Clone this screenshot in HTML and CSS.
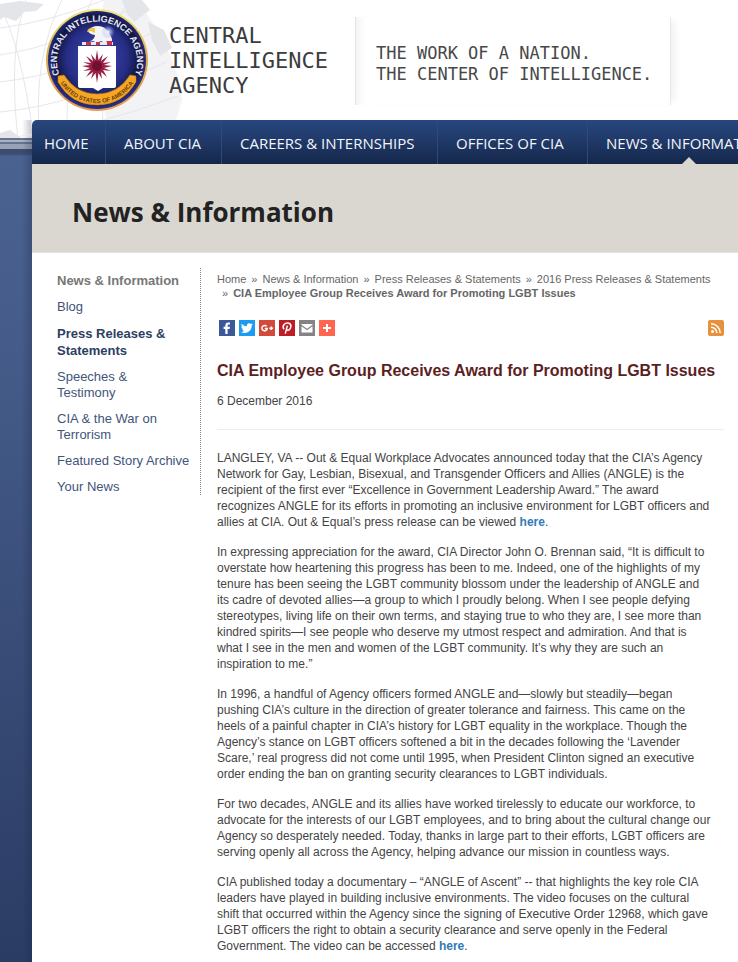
FILE: index.html
```html
<!DOCTYPE html>
<html lang="en">
<head>
<meta charset="utf-8">
<title>CIA Employee Group Receives Award for Promoting LGBT Issues</title>
<link rel="stylesheet" href="styles.css">
</head>
<body>
<header class="masthead">
  <svg class="globe" width="210" height="138" viewBox="0 0 210 138" aria-hidden="true">
    <path class="sea" d="M104 0H136Q176 48 182 100L170 140H112Q90 70 104 0Z"/>
    <path class="land" d="M0 4L20 1 44 4 36 11 24 12 16 21 4 17 0 20ZM122 0H142L150 10 134 22 126 12ZM148 22L164 30 172 48 160 56 152 40ZM0 133L10 130 24 140H0Z"/>
    <path class="grid" d="M0 28Q50 22 104 0M0 55Q60 46 128 10M0 82Q70 74 150 34M0 112Q70 106 166 62M0 139Q90 130 178 96M26 0Q8 50 18 140M62 0Q32 60 40 140M92 0Q62 60 68 140M128 0Q96 60 104 140M0 8Q20 40 34 140"/>
  </svg>
  <a class="brand" href="#">
    <svg class="seal" width="104" height="104" viewBox="0 0 104 104" role="img" aria-label="Seal">
      <defs>
        <radialGradient id="field" cx="50%" cy="48%" r="52%">
          <stop offset="0" stop-color="#3f4bb0"/>
          <stop offset=".6" stop-color="#262d86"/>
          <stop offset=".82" stop-color="#121640"/>
          <stop offset="1" stop-color="#2a3290"/>
        </radialGradient>
        <linearGradient id="rim" x1="0" y1="0" x2="0" y2="1">
          <stop offset="0" stop-color="#f0e87c"/>
          <stop offset=".5" stop-color="#d9a94a"/>
          <stop offset="1" stop-color="#e89a4c"/>
        </linearGradient>
        <radialGradient id="glow">
          <stop offset="0" stop-color="#fff"/>
          <stop offset="1" stop-color="#8fa0ff" stop-opacity="0"/>
        </radialGradient>
        <path id="arcTop" d="M14 66A40 40 0 1 1 90 66"/>
        <path id="arcBottom" d="M15 74A43 43 0 0 0 89 74"/>
      </defs>
      <circle cx="52" cy="52" r="51" fill="url(#rim)"/>
      <circle cx="52" cy="52" r="49" fill="url(#field)"/>
      <path d="M13 68L19 67Q31 86 52 86T85 67L91 68 91 74Q78 97 52 97T13 74Z" fill="#f5a623" stroke="#c47a17" stroke-width=".6"/>
      <text class="seal-name"><textPath href="#arcTop" startOffset="50%">CENTRAL INTELLIGENCE AGENCY</textPath></text>
      <text class="seal-nation"><textPath href="#arcBottom" startOffset="50%">UNITED STATES OF AMERICA</textPath></text>
      <path d="M33 38H71V78Q71 80 68 80H58L53 83 48 80H36Q33 80 33 78Z" fill="#fff"/>
      <path d="M44 34Q50 31 50 27Q44 26 43 23Q46 18 53 18Q60 18 63 24Q68 30 67 35L62 33 60 35 56 33 52 35 48 33Z" fill="#f4f4f6"/>
      <path d="M50 20Q43 19 42 24L46 23 50 25Z" fill="#e9c84a"/>
      <path d="M37 34H68V37H37Z" fill="#e8e8f4"/>
      <path d="M41 34H46V37H41ZM51 34H55V37H51ZM62 33H67V37H62Z" fill="#d22f3c"/>
      <circle cx="63" cy="24" r="7" fill="url(#glow)"/>
      <path d="M52 42L53.500 52 58 46 56 53 63 48 58 55 66 54 59 57 67 58 59 60 66 63 58 62 62 69 56 64 57 71 53.500 65 52 75 50.500 65 46 71 48 64 41 69 46 62 38 63 45 60 37 58 45 57 38 54 46 55 41 48 48 53 46 46 50.500 52Z" fill="#9c1f45"/>
      <circle cx="52" cy="58" r="5" fill="#6e1030"/>
    </svg>
    <span class="brand-name">CENTRAL<br>INTELLIGENCE<br>AGENCY</span>
  </a>
  <p class="tagline">THE WORK OF A NATION.<br>THE CENTER OF INTELLIGENCE.</p>
</header>

<div class="stage">
  <div class="page">
    <nav class="topnav" aria-label="Main">
      <a href="#">HOME</a>
      <a href="#">ABOUT CIA</a>
      <a href="#">CAREERS &amp; INTERNSHIPS</a>
      <a href="#">OFFICES OF CIA</a>
      <a href="#" class="current">NEWS &amp; INFORMATION</a>
    </nav>
    <div class="section-title"><h1>News &amp; Information</h1></div>
    <div class="columns">
      <nav class="sidenav" aria-label="Section">
        <a class="root" href="#">News &amp; Information</a>
        <a href="#">Blog</a>
        <a class="active" href="#">Press Releases &amp; Statements</a>
        <a href="#">Speeches &amp;<br>Testimony</a>
        <a href="#">CIA &amp; the War on Terrorism</a>
        <a href="#">Featured Story Archive</a>
        <a href="#">Your News</a>
      </nav>
      <main class="article">
        <nav class="crumbs" aria-label="Breadcrumb">
          <a href="#">Home</a><i>»</i><a href="#">News &amp; Information</a><i>»</i><a href="#">Press Releases &amp; Statements</a><i>»</i><a href="#">2016 Press Releases &amp; Statements</a><br><i>»</i><b>CIA Employee Group Receives Award for Promoting LGBT Issues</b>
        </nav>
        <div class="share">
          <a href="#" class="facebook" aria-label="Facebook"><svg viewBox="0 0 16 16"><path d="M8.600 14V9H10.600L11 6.800H8.600V5.600Q8.600 4.600 9.700 4.600H11V2.600Q6.300 1.900 6.300 5.400V6.800H4.600V9H6.300V14Z"/></svg></a>
          <a href="#" class="twitter" aria-label="Twitter"><svg viewBox="0 0 16 16"><path d="M14 4.300L12.700 5.600C12.600 10.500 9 13.200 5.300 13Q3.400 13 2 12Q4 12 5.300 11Q3.600 10.700 3.100 9.200H4.100Q2.200 8.400 2.200 6.600L3.300 6.900Q1.800 5.500 2.700 3.700Q5 6.200 7.900 6.300C7.400 3.500 10.200 2.400 12 4L13.500 3.400 12.600 4.600Z"/></svg></a>
          <a href="#" class="google" aria-label="Google Plus"><svg viewBox="0 0 16 16"><path class="line" d="M7.600 6.300A2.700 2.700 0 1 0 8.300 8.500H5.800M12.200 6.500V10.100M10.400 8.300H14"/></svg></a>
          <a href="#" class="pinterest" aria-label="Pinterest"><svg viewBox="0 0 16 16"><path class="line" d="M8.400 5.600L6.300 13.600M5 9.300Q3.300 7.100 4.900 4.800Q7 2.400 10 3.300Q12.600 4.500 11.700 7.400Q10.700 10.500 8.600 10.200Q7.400 10 7.300 9"/></svg></a>
          <a href="#" class="email" aria-label="Email"><svg viewBox="0 0 16 16"><path d="M2.500 4H13.500V4.800L8 8.800 2.500 4.800ZM2.500 6.200L8 10.200 13.500 6.200V12.500H2.500Z"/></svg></a>
          <a href="#" class="more" aria-label="More"><svg viewBox="0 0 16 16"><path d="M7 4H9V7H12V9H9V12H7V9H4V7H7Z"/></svg></a>
          <a href="#" class="rss" aria-label="RSS feed"><svg viewBox="0 0 16 16"><circle cx="4.500" cy="11.500" r="1.500"/><path class="line" d="M3 7.200A5.800 5.800 0 0 1 8.800 13M3 3.800A9.200 9.200 0 0 1 12.200 13"/></svg></a>
        </div>
        <h2>CIA Employee Group Receives Award for Promoting LGBT Issues</h2>
        <p class="date">6 December 2016</p>
        <div class="body">
          <p>LANGLEY, VA -- Out &amp; Equal Workplace Advocates announced today that the CIA’s Agency<br>Network for Gay, Lesbian, Bisexual, and Transgender Officers and Allies (ANGLE) is the<br>recipient of the first ever “Excellence in Government Leadership Award.” The award<br>recognizes ANGLE for its efforts in promoting an inclusive environment for LGBT officers and<br>allies at CIA. Out &amp; Equal’s press release can be viewed <a href="#">here</a>.</p>
          <p>In expressing appreciation for the award, CIA Director John O. Brennan said, “It is difficult to<br>overstate how heartening this progress has been to me. Indeed, one of the highlights of my<br>tenure has been seeing the LGBT community blossom under the leadership of ANGLE and<br>its cadre of devoted allies—a group to which I proudly belong. When I see people defying<br>stereotypes, living life on their own terms, and staying true to who they are, I see more than<br>kindred spirits—I see people who deserve my utmost respect and admiration. And that is<br>what I see in the men and women of the LGBT community. It’s why they are such an<br>inspiration to me.”</p>
          <p>In 1996, a handful of Agency officers formed ANGLE and—slowly but steadily—began<br>pushing CIA’s culture in the direction of greater tolerance and fairness. This came on the<br>heels of a painful chapter in CIA’s history for LGBT equality in the workplace. Though the<br>Agency’s stance on LGBT officers softened a bit in the decades following the ‘Lavender<br>Scare,’ real progress did not come until 1995, when President Clinton signed an executive<br>order ending the ban on granting security clearances to LGBT individuals.</p>
          <p>For two decades, ANGLE and its allies have worked tirelessly to educate our workforce, to<br>advocate for the interests of our LGBT employees, and to bring about the cultural change our<br>Agency so desperately needed. Today, thanks in large part to their efforts, LGBT officers are<br>serving openly all across the Agency, helping advance our mission in countless ways.</p>
          <p>CIA published today a documentary – “ANGLE of Ascent” -- that highlights the key role CIA<br>leaders have played in building inclusive environments. The video focuses on the cultural<br>shift that occurred within the Agency since the signing of Executive Order 12968, which gave<br>LGBT officers the right to obtain a security clearance and serve openly in the Federal<br>Government. The video can be accessed <a href="#">here</a>.</p>
        </div>
      </main>
    </div>
  </div>
</div>
</body>
</html>
```

FILE: styles.css
```css
* { box-sizing: border-box; }

body {
  display: flex;
  flex-direction: column;
  min-height: 100vh;
  margin: 0;
  background: #fff;
  color: #444;
  font: 12px/16px "Liberation Sans", Arial, sans-serif;
  overflow-x: hidden;
}

a { color: inherit; text-decoration: none; }

.masthead {
  position: relative;
  display: flex;
  align-items: flex-start;
  height: 120px;
  padding: 8px 0 0 45px;
}

.globe { position: absolute; z-index: 1; left: 0; top: 0; }
.globe .sea { fill: #f3f3f6; }
.globe .land { fill: #e4e5e9; }
.globe .grid { fill: none; stroke: #e6e7ea; stroke-width: 1; }

.brand {
  position: relative;
  z-index: 2;
  display: flex;
  gap: 20px;
  width: 310px;
  color: #3c3c3c;
}

.seal { flex: none; }
.seal-name {
  fill: #e6e9f7;
  font: bold 9px "Liberation Sans", Arial, sans-serif;
  text-anchor: middle;
}
.seal-nation {
  fill: #6b3c08;
  font: bold 6px "Liberation Sans", Arial, sans-serif;
  text-anchor: middle;
}

.brand-name {
  padding-top: 15px;
  font: 22px/25px "DejaVu Sans Mono", monospace;
}

.tagline {
  margin: 9px 0 0;
  width: 315px;
  height: 88px;
  padding: 26px 0 0 20px;
  border-left: 1px solid #e2e2e2;
  background: linear-gradient(90deg, #f5f5f5, #fff 10px);
  box-shadow: 1px 0 0 #e8e8e8, 8px 0 8px -4px #eee;
  color: #484848;
  font: 17px/21px "DejaVu Sans Mono", monospace;
  white-space: nowrap;
}

.stage {
  display: flex;
  flex: 1;
  padding-left: 32px;
  background:
    linear-gradient(90deg, transparent 22px, rgba(20, 30, 60, .25) 32px, transparent 32px),
    linear-gradient(#fff 0 18px, #66748f 18px 20px, #a9b1c2 20px 22px, #66748f 22px 24px, #98a2b6 24px 29px, #3c4c70 29px 34px, #4a628f 36px, #465d8b 200px, #2b3c64 100%);
}

.page {
  position: relative;
  z-index: 2;
  flex: 1;
  min-width: 0;
  background: #fff;
  border-radius: 5px 0 0 0;
}

.topnav {
  display: grid;
  grid-template-columns: 73px 116px 216px 150px 202px;
  grid-template-rows: 44px;
  overflow: hidden;
  border-radius: 5px 0 0 0;
  background: linear-gradient(#28477e, #1f3867 50%, #15284a);
  color: #f2f5fa;
  font: 15px/47px "Open Sans", sans-serif;
}

.topnav a {
  position: relative;
  padding-left: 18px;
  border-left: 1px solid #2f4a7a;
  white-space: nowrap;
}
.topnav a:first-child { padding-left: 12px; border-left: 0; }
.topnav .current::after {
  content: "";
  position: absolute;
  left: 94px;
  bottom: 0;
  border: 7px solid transparent;
  border-top: 0;
  border-bottom-color: #dad7d0;
}

.section-title {
  height: 89px;
  padding: 28px 0 0 40px;
  background: #dad7d0;
  border-bottom: 1px solid #e4e2de;
}
.section-title h1 {
  margin: 0;
  color: #222;
  font: bold 26px/40px "Open Sans", sans-serif;
}

.columns {
  display: grid;
  grid-template-columns: 169px minmax(0, 1fr);
  gap: 16px;
  align-items: start;
  padding: 15px 14px 6px 0;
}

.sidenav {
  display: flex;
  flex-direction: column;
  gap: 10px;
  padding: 5px 10px 0 25px;
  border-right: 1px dotted #888;
  color: #41557a;
  font-size: 13px;
}
.sidenav .root { color: #777; font-weight: bold; white-space: nowrap; }
.sidenav .active { color: #2b3f63; font-weight: bold; line-height: 17px; }

.crumbs {
  padding-top: 4px;
  color: #666;
  font-size: 11px;
  line-height: 14px;
  white-space: nowrap;
}
.crumbs i { padding: 0 5px; font-style: normal; }

.share { display: flex; gap: 4px; margin: 20px 0 0 2px; }
.share a { width: 16px; height: 16px; }
.share svg { display: block; fill: #fff; }
.share .line { fill: none; stroke: #fff; stroke-width: 1.5; }
.facebook { background: #3b5998; }
.twitter { background: #1d9bf0; }
.google { background: #d34a3c; }
.pinterest { background: #bd1e25; }
.email { background: #848484; }
.more { background: #ff6550; }
.rss { margin-left: auto; border-radius: 2px; background: #e8913c; }

h2 {
  margin: 25px 0 0;
  color: #5c1f1f;
  font-size: 16px;
  line-height: 20px;
  white-space: nowrap;
}

.date { margin: 12px 0 20px; }

.body {
  padding-top: 20px;
  border-top: 1px solid #eee;
  white-space: nowrap;
}
.body p { margin: 0 0 14px; }
.body p:last-child { margin: 0; }
.body a { color: #2f7cb8; font-weight: bold; }
```
